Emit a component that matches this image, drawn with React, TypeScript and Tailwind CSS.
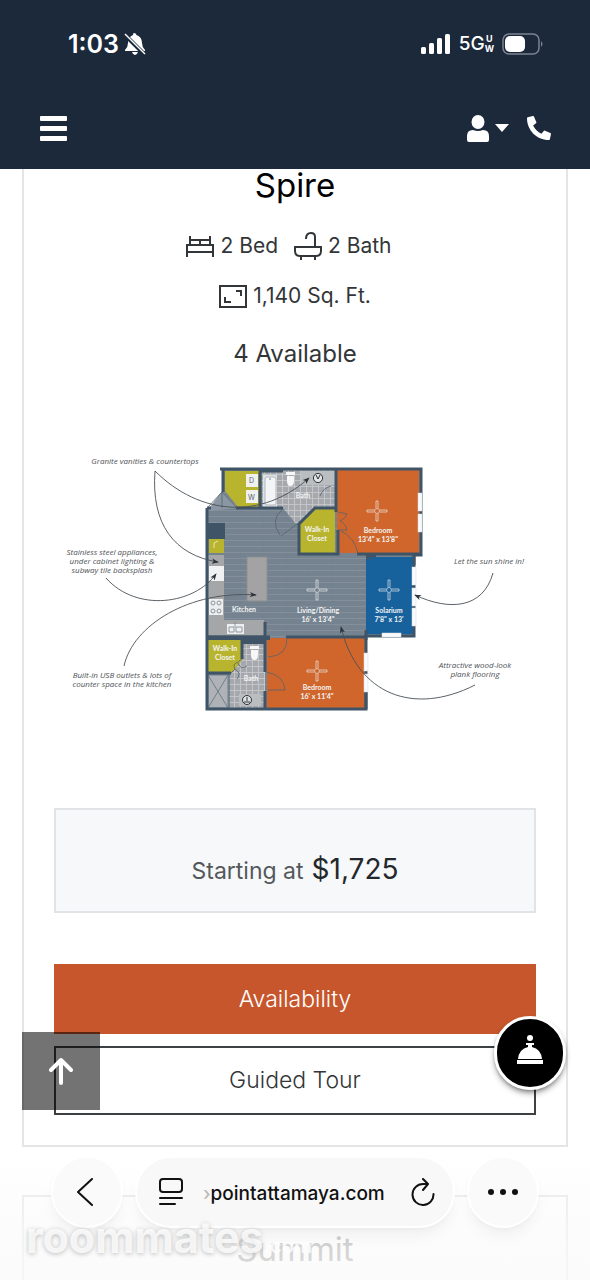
import { FaPhoneAlt } from "react-icons/fa";

const callouts = [
    { x: 145, y: 464, lines: ["Granite vanities & countertops"] },
    { x: 112, y: 555, lines: ["Stainless steel appliances,", "under cabinet lighting &", "subway tile backsplash"] },
    { x: 122, y: 678, lines: ["Built-in USB outlets & lots of", "counter space in the kitchen"] },
    { x: 489, y: 564, lines: ["Let the sun shine in!"] },
    { x: 475, y: 668, lines: ["Attractive wood-look", "plank flooring"] },
];

const rooms = [
    { x: 303, y: 498, lines: ["Bath"] },
    { x: 317, y: 532, lines: ["Walk-In", "Closet"] },
    { x: 378, y: 533, lines: ["Bedroom", "13'4\" x 13'8\""] },
    { x: 244, y: 612, lines: ["Kitchen"] },
    { x: 318, y: 613, lines: ["Living/Dining", "16' x 13'4\""] },
    { x: 389, y: 613, lines: ["Solarium", "7'8\" x 13'"] },
    { x: 225, y: 651, lines: ["Walk-In", "Closet"] },
    { x: 251, y: 681, lines: ["Bath"] },
    { x: 317, y: 690, lines: ["Bedroom", "16' x 11'4\""] },
];

const fans = [[377, 511], [317, 590], [389, 590], [317, 671]];

function FloorPlan() {
    return (
        <svg viewBox="54 446 482 274" className="block w-full" role="img" aria-label="Spire floor plan">
            <defs>
                <pattern id="planks" width="46" height="6" patternUnits="userSpaceOnUse">
                    <rect width="46" height="6" fill="#75828f" />
                    <path d="M0 .5H46" stroke="#8996a2" strokeWidth=".7" />
                    <path d="M10 .5V3.5M33 3.5V6" stroke="#6c7a88" strokeWidth=".5" />
                </pattern>
                <pattern id="tiles" width="6" height="6" patternUnits="userSpaceOnUse">
                    <rect width="6" height="6" fill="#a5a9ae" />
                    <path d="M0 .5H6M.5 0V6" stroke="#c9cccf" strokeWidth=".8" />
                </pattern>
                <marker id="arrow" viewBox="0 0 8 8" refX="7" refY="4" markerWidth="7" markerHeight="7" orient="auto" markerUnits="userSpaceOnUse">
                    <path d="M0 1L8 4L0 7L2 4Z" fill="#2c333b" />
                </marker>
            </defs>

            {/* Floors */}
            <path d="M206 508H222V468H421V554H414V636H367V709H206Z" fill="url(#planks)" />
            <path d="M262 469H336V508H315L296 524L283 508H262Z" fill="url(#tiles)" />
            <path d="M242 644H265V708H230V675L242 659Z" fill="url(#tiles)" />
            <path d="M207 511L222 491L238 508Z" fill="#8b98a4" />
            <path d="M225 471H260V507H238L225 491Z" fill="#b9b42d" />
            <path d="M299 524L315 509H335V553H299Z" fill="#b9b42d" />
            <path d="M208 638H242V660L232 673H208Z" fill="#b9b42d" />
            <path d="M337 470H419V553H338V530H337Z" fill="#d0662c" />
            <rect x="267" y="638" width="98" height="70" fill="#d0662c" />
            <rect x="366" y="557" width="47" height="77" fill="#17629d" />

            {/* Kitchen */}
            <rect x="208" y="523" width="17" height="16" fill="#405467" />
            <rect x="209" y="539" width="15" height="14" fill="#b9b42d" />
            <path d="M208 555H224V620H264V635H208Z" fill="#a4a6a8" />
            <rect x="209" y="566" width="15" height="15" fill="#eff1f2" />
            <rect x="209" y="599" width="14" height="16" fill="#eceeef" />
            <g fill="none" stroke="#77808a" strokeWidth=".8">
                <circle cx="213" cy="603" r="2" />
                <circle cx="219" cy="603" r="2" />
                <circle cx="213" cy="611" r="2" />
                <circle cx="219" cy="611" r="2" />
            </g>
            <path d="M214 548V543L218 541" stroke="#e7e5b3" fill="none" />
            <rect x="247" y="557" width="20" height="44" fill="#a3a3a3" stroke="#8b8f93" />
            <rect x="227" y="624" width="17" height="10" fill="#eceeef" />
            <path d="M229 627H234V632H229ZM236 627H242V632H236ZM235 622V627" fill="none" stroke="#7b858f" strokeWidth=".8" />

            {/* Fixtures */}
            <rect x="246" y="474" width="12" height="13" fill="#f0f1ef" />
            <rect x="246" y="490" width="12" height="13" fill="#f0f1ef" />
            <text x="249" y="483" fontSize="7" fill="#59616a">D</text>
            <text x="248" y="500" fontSize="7" fill="#59616a">W</text>
            <rect x="263" y="475" width="14" height="32" fill="#dfe2e4" />
            <rect x="265" y="477" width="11" height="28" rx="2" fill="#f2f4f5" stroke="#a4abb2" strokeWidth=".8" />
            <circle cx="270" cy="479" r=".8" fill="#64707c" />
            <rect x="301" y="471" width="34" height="14" fill="#bbbec1" />
            <circle cx="318" cy="478" r="4.6" fill="#e0e2e3" stroke="#2c333b" />
            <path d="M316 475L318 479L320 475" fill="none" stroke="#2c333b" />
            <path d="M286 472H295V475H286ZM287 476H294V481Q294 486 290.5 486Q287 486 287 481Z" fill="#f7f7f7" />
            <path d="M250 646H259V649H250ZM251 650H258V655Q258 660 254.5 660Q251 660 251 655Z" fill="#f7f7f7" />
            <path d="M208 675H228V708H208ZM208 675L228 708M228 675L208 708" fill="#afb2b6" stroke="#717f8d" />
            <rect x="239" y="694" width="22" height="12" fill="#bbbec1" />
            <circle cx="247" cy="700" r="4.5" fill="#e0e2e3" stroke="#2c333b" />
            <path d="M247 697V701M244 702H250" stroke="#2c333b" />

            {/* Walls */}
            <g fill="none" stroke="#405467" strokeWidth="3">
                <path d="M207 508V709H366V636H414V555H421V469H220" />
                <path d="M223 468V492M207 508H211M236 508H283" />
                <path d="M260 469V508M261 471H283M336 469V508M336 508H315L299 524V554H338V530M336 508V512M357 554H421M368 556V560M414 555V565M366 556H376" />
                <path d="M208 637H270M286 637H366M265 622V672M265 691V709M208 673H231M242 638V659M366 630V640M366 674V709" />
            </g>
            <path d="M206 636H270V640H264V644H242V640H206Z" fill="#405467" />
            <path d="M337 512H346V530H337Z" fill="#d0662c" />

            {/* Windows */}
            <g fill="#f8fafb" stroke="#d7dce0" strokeWidth=".5">
                <rect x="418" y="493" width="4" height="18" />
                <rect x="418" y="514" width="4" height="18" />
                <rect x="412" y="567" width="4" height="18" />
                <rect x="412" y="588" width="4" height="18" />
                <rect x="412" y="608" width="4" height="18" />
                <rect x="382" y="633" width="19" height="4" />
                <rect x="364" y="653" width="4" height="18" />
                <rect x="364" y="674" width="4" height="18" />
            </g>

            {/* Door swings */}
            <g fill="none" stroke="#56636e" strokeWidth=".8">
                <path d="M222 492V508M207 508L222 492L237 508" />
                <path d="M297 524L281 536M283 509Q269 520 280 535" />
                <path d="M338 512L347 514Q346 518 340 521Q346 524 347 530L338 530M341 531Q354 537 358 553" />
                <path d="M268 657Q288 656 287 637M268 690H285Q284 675 266 672" />
                <path d="M230 674L235 669Q232 664 238 662L242 659M238 663Q240 670 247 666M235 669Q242 673 237 679" />
                <path d="M320 496Q323 488 331 486" />
            </g>

            {/* Ceiling fans */}
            {fans.map(([x, y]) => (
                <g key={`${x}-${y}`} transform={`translate(${x} ${y})`} fill="none" stroke="#eef0ee" strokeWidth=".8" opacity=".85">
                    <circle r="2.5" />
                    <path d="M-1 -3V-10H1V-3M-1 3V10H1V3M-3 -1H-10V1H-3M3 -1H10V1H3" />
                </g>
            ))}

            {/* Labels */}
            <g fontFamily="Lato, sans-serif" fontSize="7" fontWeight="700" fill="#f3f5f5" textAnchor="middle">
                {rooms.map((room) => (
                    <text key={`${room.x}-${room.y}`}>
                        {room.lines.map((line, i) => (
                            <tspan key={line} x={room.x} y={room.y + i * 9}>{line}</tspan>
                        ))}
                    </text>
                ))}
            </g>
            <g fontFamily="Open Sans, sans-serif" fontSize="8" fontStyle="italic" fill="#4e5256" textAnchor="middle">
                {callouts.map((callout) => (
                    <text key={callout.y}>
                        {callout.lines.map((line, i) => (
                            <tspan key={line} x={callout.x} y={callout.y + i * 9}>{line}</tspan>
                        ))}
                    </text>
                ))}
            </g>
            <g fill="none" stroke="#4a5056" strokeWidth=".9">
                <path d="M155 471C200 516 262 520 309 478" markerEnd="url(#arrow)" />
                <path d="M155 471C151 524 174 555 218 562" markerEnd="url(#arrow)" />
                <path d="M106 578C137 613 195 604 216 574" markerEnd="url(#arrow)" />
                <path d="M124 666C133 625 190 590 256 595" markerEnd="url(#arrow)" />
                <path d="M493 573C483 609 449 611 415 595" markerEnd="url(#arrow)" />
                <path d="M475 685C414 716 357 695 341 627" markerEnd="url(#arrow)" />
            </g>
        </svg>
    );
}

function StatusBar() {
    return (
        <div className="flex h-[88px] items-center justify-between pl-[68px] pr-[46px]">
            <div className="flex items-center gap-1">
                <span className="text-[25px] font-semibold leading-8">1:03</span>
                <svg className="h-6 w-6" viewBox="0 0 24 24" fill="currentColor" aria-hidden="true">
                    <path d="M11 1Q13 1 13.5 3Q19 5 19 11Q19 15 22 18V19H2V18Q5 15 5 11Q5 5 10 3Q10 1 11 1ZM9 20H15Q14 23 12 23T9 20Z" />
                    <path d="M2 3L22 23" stroke="#1c293b" strokeWidth="4" />
                    <path d="M2 2L22 22" stroke="currentColor" strokeWidth="1.5" />
                </svg>
            </div>
            <div className="flex items-center">
                <svg className="h-[22px] w-[30px]" viewBox="0 0 30 22" fill="currentColor" aria-hidden="true">
                    <rect x="0" y="14" width="5" height="7" rx="1.5" />
                    <rect x="8" y="10" width="5" height="11" rx="1.5" />
                    <rect x="16" y="5" width="5" height="16" rx="1.5" />
                    <rect x="24" y="1" width="5" height="20" rx="1.5" />
                </svg>
                <span className="ml-2 text-[19px] font-medium">5G</span>
                <span className="flex flex-col items-center text-[9px] font-bold leading-[10px]"><span>U</span><span>W</span></span>
                <svg className="ml-2 h-6 w-[42px]" viewBox="0 0 42 24" aria-hidden="true">
                    <rect x="1" y="2" width="36" height="20" rx="6" fill="none" stroke="#7a8390" strokeWidth="1.5" />
                    <rect x="3" y="4" width="20" height="16" rx="5" fill="white" />
                    <path d="M39 9Q42 12 39 15Z" fill="#7a8390" />
                </svg>
            </div>
        </div>
    );
}

function Header() {
    return (
        <header className="h-[169px] bg-[#1c293b] text-white">
            <StatusBar />
            <nav className="flex h-20 items-center justify-between pl-10 pr-[39px]">
                <button type="button" aria-label="Menu">
                    <svg className="h-7 w-7" viewBox="0 0 28 28" fill="currentColor">
                        <rect x="0" y="2" width="27" height="5" rx="1" />
                        <rect x="0" y="12" width="27" height="5" rx="1" />
                        <rect x="0" y="22" width="27" height="5" rx="1" />
                    </svg>
                </button>
                <div className="flex items-center gap-[18px]">
                    <button type="button" aria-label="Account" className="flex items-center gap-[6px]">
                        <svg className="h-7 w-[22px]" viewBox="0 0 22 28" fill="currentColor">
                            <ellipse cx="11" cy="8" rx="6.5" ry="7" />
                            <path d="M0 26V22Q0 16 6 16Q11 18 16 16Q22 16 22 22V26Q22 28 20 28H2Q0 28 0 26Z" />
                        </svg>
                        <svg className="h-2 w-[14px]" viewBox="0 0 14 8" fill="currentColor"><path d="M0 0H14L7 8Z" /></svg>
                    </button>
                    <a href="#call" aria-label="Call"><FaPhoneAlt className="h-6 w-6" /></a>
                </div>
            </nav>
        </header>
    );
}

function BedIcon() {
    return (
        <svg className="h-7 w-7" viewBox="0 0 28 28" fill="none" stroke="currentColor" strokeWidth="2" aria-hidden="true">
            <path d="M1 25V13H27V25M1 20H27M4 13V4M24 13V4M4 8H24M14 8V13" />
        </svg>
    );
}

function BathIcon() {
    return (
        <svg className="h-7 w-7" viewBox="0 0 28 28" fill="none" stroke="currentColor" strokeWidth="2" aria-hidden="true">
            <path d="M1 15H27V19Q27 24 22 24H6Q1 24 1 19ZM7 24V28M21 24V28M21 15V5Q21 1 17 1Q12 1 12 7" />
        </svg>
    );
}

function AreaIcon() {
    return (
        <svg className="h-7 w-7" viewBox="0 0 28 28" fill="none" stroke="currentColor" strokeWidth="2" aria-hidden="true">
            <path d="M1 4H27V25H1ZM6 15V20H12M17 9H22V14" />
        </svg>
    );
}

function PlanCard() {
    return (
        <article className="mx-[22px] border-2 border-t-0 border-[#e4e5e6] px-[30px] pb-[30px] text-[#333638]">
            <h2 className="text-center text-[33px] leading-8 text-black">Spire</h2>
            <div className="mt-5 flex h-[50px] items-center justify-center gap-4 pr-3 text-[21px]">
                <span className="flex items-center gap-[6px]"><BedIcon />2 Bed</span>
                <span className="flex items-center gap-[6px]"><BathIcon />2 Bath</span>
            </div>
            <div className="flex h-[50px] items-center justify-center gap-[6px] text-[21px]"><AreaIcon />1,140 Sq. Ft.</div>
            <p className="mt-4 text-center text-2xl leading-[34px]">4 Available</p>
            <div className="mt-[75px]"><FloorPlan /></div>
            <div className="mt-[88px] flex h-[105px] items-baseline justify-center gap-2 border-2 border-[#e0e4e7] bg-[#f6f8fa] pt-[38px]">
                <span className="text-[23px] text-[#55585b]">Starting at</span>
                <strong className="text-[28px] font-normal text-[#25282b]">$1,725</strong>
            </div>
            <button type="button" className="mt-[51px] block h-[70px] w-full bg-[#c7562c] text-[23px] font-light text-white">Availability</button>
            <button type="button" className="mt-3 block h-[69px] w-full border-2 border-[#3e4144] text-[23px] font-light">Guided Tour</button>
        </article>
    );
}

function BrowserBar() {
    return (
        <div className="absolute inset-x-0 bottom-0 h-[124px] bg-linear-to-b from-white/0 via-[#fafafa]/60 to-[#fafafa]/80 text-[#111111]">
            <div className="mx-[51px] flex justify-between gap-3">
                <button type="button" aria-label="Back" className="flex h-[72px] w-[72px] items-center justify-center rounded-full border-2 border-white bg-[#fafafa] shadow-lg shadow-black/5">
                    <svg className="h-7 w-5" viewBox="0 0 20 28" fill="none" stroke="currentColor" strokeWidth="2" strokeLinecap="round" strokeLinejoin="round"><path d="M15 1L1 14L15 27" /></svg>
                </button>
                <div className="flex h-[72px] min-w-0 flex-1 items-center rounded-full border-2 border-white bg-[#f8f8f8] pl-[22px] pr-[18px] shadow-lg shadow-black/5">
                    <button type="button" aria-label="Page settings">
                        <svg className="h-7 w-6" viewBox="0 0 24 28" fill="none" stroke="currentColor" strokeWidth="2" strokeLinecap="round"><rect x="1" y="1" width="22" height="13" rx="3" /><path d="M1 20H23M1 26H16" /></svg>
                    </button>
                    <span className="ml-5 flex-1 overflow-hidden pt-1 text-[19px] font-medium"><span className="text-[#bbbbbb]">›</span>pointattamaya.com</span>
                    <button type="button" aria-label="Reload">
                        <svg className="h-7 w-6" viewBox="0 0 24 28" fill="none" stroke="currentColor" strokeWidth="2" strokeLinecap="round" strokeLinejoin="round"><path d="M16 6H12A10.5 10.5 0 1 0 22.5 16M12 1L17 6L12 12" /></svg>
                    </button>
                </div>
                <button type="button" aria-label="More" className="flex h-[72px] w-[72px] items-center justify-center rounded-full border-2 border-white bg-[#fafafa] shadow-lg shadow-black/5">
                    <svg className="h-[6px] w-[30px]" viewBox="0 0 30 6" fill="currentColor"><circle cx="3" cy="3" r="3" /><circle cx="15" cy="3" r="3" /><circle cx="27" cy="3" r="3" /></svg>
                </button>
            </div>
        </div>
    );
}

export default function App() {
    return (
        <div className="relative h-screen overflow-hidden bg-white font-['Inter',sans-serif]">
            <Header />
            <main>
                <PlanCard />
                <article className="mx-[22px] mt-12 h-40 border-2 border-[#e4e5e6] pt-9">
                    <h2 className="text-center text-[33px] leading-8 text-[#777777]">Summit</h2>
                </article>
            </main>
            <button type="button" aria-label="Back to top" className="absolute bottom-[170px] left-[22px] flex h-[78px] w-[78px] items-center justify-center bg-black/55 text-white">
                <svg className="h-7 w-6" viewBox="0 0 24 28" fill="none" stroke="currentColor" strokeWidth="4" strokeLinecap="round" strokeLinejoin="round"><path d="M12 26V3M2 13L12 3L22 13" /></svg>
            </button>
            <button type="button" aria-label="Concierge" className="absolute bottom-[190px] right-6 flex h-[74px] w-[72px] items-center justify-center rounded-full border-3 border-white bg-black pb-2 text-white shadow-md shadow-black/40">
                <svg className="h-8 w-7" viewBox="0 0 28 32" fill="currentColor"><circle cx="14" cy="5" r="3" /><path d="M10 10H18V12H16V14Q25 16 26 26H2Q3 16 12 14V12H10ZM1 27H27V31H1Z" /></svg>
            </button>
            <BrowserBar />
            <div className="absolute bottom-[18px] left-[26px] flex items-baseline text-white/80">
                <span className="text-[43px] font-bold leading-[50px] [text-shadow:0_1px_5px_#bbbbbb]">roommates</span>
                <span className="text-xl font-semibold">.com</span>
            </div>
        </div>
    );
}
